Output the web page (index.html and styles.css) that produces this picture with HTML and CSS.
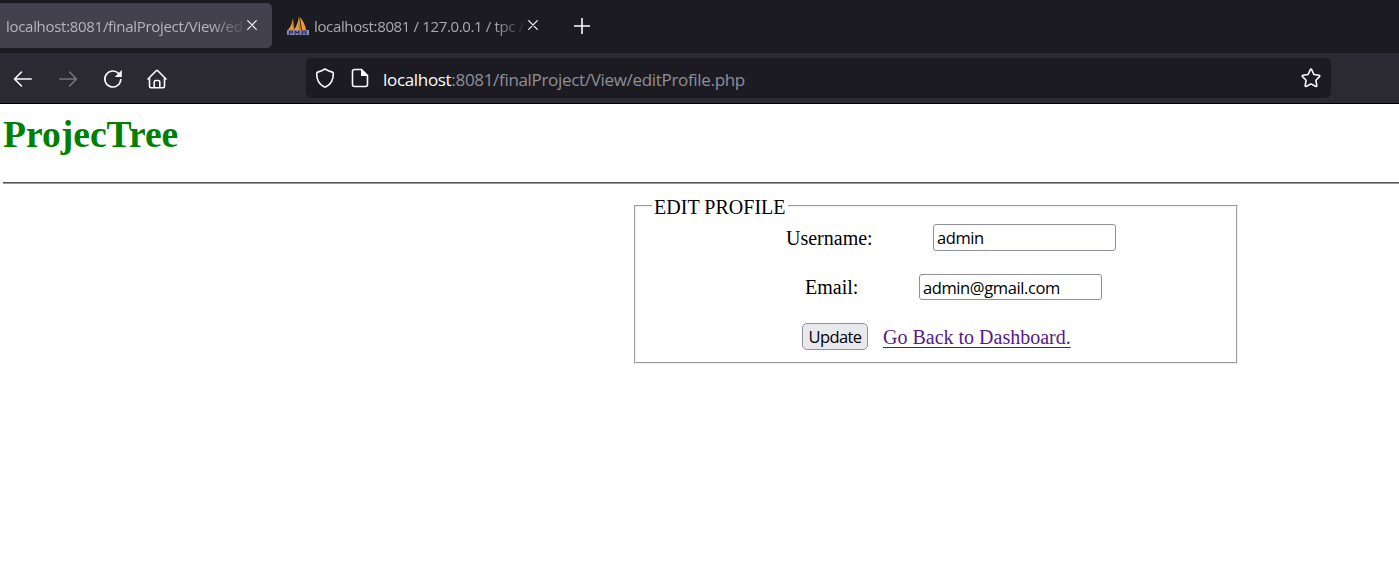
FILE: index.html
```html
<!DOCTYPE html>
<html lang="en">
<head>
<meta charset="utf-8">
<title>Edit Profile</title>
<link rel="stylesheet" href="styles.css">
</head>
<body>
<header class="browser">
  <div class="tabs">
    <div class="tab tab-active">
      <span class="tab-title">localhost:8081/finalProject/View/ed</span>
      <svg class="close" viewBox="0 0 10 10"><path d="M.7.7l8.6 8.6M9.3.7L.7 9.3"/></svg>
    </div>
    <div class="tab tab-second">
      <svg class="favicon" viewBox="0 0 22 20">
        <path fill="#f39a2b" d="M1 14Q5 9 6 2L7 14zM7 14Q11 8 12 0L14 14zM13 1Q18 7 19 14h-4z"/>
        <path fill="#c87820" d="M5 6l3 8H6zM11 4l3 10h-2z"/>
        <path fill="none" stroke="#8b8db8" stroke-width="5" d="M1 16.500h20"/>
        <path fill="none" stroke="#292b54" stroke-width="1.1" d="M2.500 19v-4h3v2h-3M8 19v-4l2 2 2-2v4M15 19v-4h4v4M15 17h4"/>
      </svg>
      <span class="tab-title">localhost:8081 / 127.0.0.1 / tpc /</span>
      <svg class="close" viewBox="0 0 10 10"><path d="M.7.7l8.6 8.6M9.3.7L.7 9.3"/></svg>
    </div>
    <svg class="plus" viewBox="0 0 16 16"><path d="M8 .5v15M.5 8h15"/></svg>
  </div>
  <div class="toolbar">
    <nav class="nav">
      <svg viewBox="0 0 20 20"><path d="M18.2 10H1.500M8.500 3L1.500 10l7 7"/></svg>
      <svg class="dim" viewBox="0 0 20 20"><path d="M1.800 10h16.700M11.500 3l7 7-7 7"/></svg>
      <svg viewBox="0 0 20 20"><path d="M17.800 10.500A8 8 0 1 1 15.700 4.600"/><path class="solid" d="M18.800 1v7h-7z"/></svg>
      <svg class="home" viewBox="0 0 20 20"><path d="M1 10l8.200-8.200q.8-.8 1.600 0L19 10M2.500 8.500V17q0 1.700 1.700 1.700h11.600q1.700 0 1.700-1.700V8.500M7.200 18.500V13q0-1.500 1.500-1.500h2.600q1.500 0 1.500 1.500v5.500"/></svg>
    </nav>
    <div class="address">
      <svg class="shield" viewBox="0 0 20 20"><path d="M10 1Q13 3 17.300 4.100q1 .3 1 1.400C18.300 11 16 16.500 11 18.800q-1 .5-2 0C4 16.500 1.700 11 1.700 5.500q0-1.100 1-1.400Q7 3 10 1z"/></svg>
      <svg class="page-icon" viewBox="0 0 20 20"><path d="M4.500 1.500h7l6 6v9q0 2-2 2h-11q-2 0-2-2v-13q0-2 2-2z"/><path class="solid" d="M11 1l7 7h-7z"/></svg>
      <span class="url"><b>localhost</b>:8081/finalProject/View/editProfile.php</span>
      <svg class="star" viewBox="0 0 20 20"><path d="M9.200 1.800q.8-1.300 1.600 0l2.100 4.700 5.100.7q1.300.3.500 1.400l-3.600 3.700.9 5.100q0 1.400-1.300.9L10 15.900l-4.500 2.400q-1.300.5-1.300-.9l.9-5.100-3.600-3.700q-.8-1.100.5-1.400l5.100-.7z"/></svg>
    </div>
  </div>
</header>
<main class="content">
  <h1 class="brand">ProjecTree</h1>
  <hr class="rule">
  <form class="form">
    <fieldset class="profile">
      <legend class="legend">EDIT PROFILE</legend>
      <div class="row row-user"><label class="label-user" for="user">Username:</label><input class="field" id="user" type="text" value="admin"></div>
      <div class="row row-email"><label class="label-email" for="email">Email:</label><input class="field field-email" id="email" type="text" value="admin@gmail.com"></div>
      <div class="row row-actions"><button class="update" type="button">Update</button><a class="back" href="#">Go Back to Dashboard.</a></div>
    </fieldset>
  </form>
</main>
</body>
</html>
```
FILE: styles.css
```css
* { box-sizing: border-box; }
body { margin: 0; height: 582px; overflow: hidden; background: #fff; color: #000; font: 20px "Liberation Serif", serif; }
svg { flex: none; fill: none; stroke: #fbfbfe; stroke-width: 1.6; stroke-linecap: round; stroke-linejoin: round; }
.solid { fill: #fbfbfe; stroke: none; }

.browser { height: 104px; background: #2b2a33; border-bottom: 1px solid #000; font-family: "Open Sans", sans-serif; }
.tabs { height: 53px; display: flex; align-items: center; background: #1c1b22; }
.tab { height: 45px; display: flex; align-items: center; color: #a9a9b0; font-size: 15px; }
.tab-active { width: 272px; margin-top: -3px; padding-left: 6px; background: #42414d; border-radius: 0 5px 5px 0; color: #b5b5bd; }
.tab-second { width: 295px; padding-left: 15px; margin-top: -3px; }
.tab-title { flex: none; white-space: nowrap; letter-spacing: -.3px; padding-top: 1px; width: 238px; mask-image: linear-gradient(to right, #000 204px, transparent 242px); }
.tab-second .tab-title { width: 211px; margin-left: 5px; letter-spacing: -.36px; mask-image: linear-gradient(to right, #000 180px, transparent 214px); }
.close { width: 10px; height: 10px; margin-left: 3px; stroke-width: 1.2; }
.favicon { width: 22px; height: 20px; stroke: none; margin-top: 2px; }
.plus { width: 16px; height: 16px; margin-left: 7px; stroke-width: 1.6; margin-top: -1px; }

.toolbar { height: 50px; display: flex; align-items: center; }
.nav { width: 306px; display: flex; gap: 25px; padding: 1px 0 0 13px; }
.nav svg { width: 20px; height: 20px; }
.nav .home { margin-left: -1px; }
.nav .dim { stroke: #77767d; }
.address { width: 1025px; height: 40px; padding: 0 10px 0 9px; display: flex; align-items: center; border-radius: 5px; background: #1c1b22; }
.shield, .page-icon, .star { width: 20px; height: 20px; }
.page-icon { margin-left: 15px; }
.url { margin-left: 13px; padding-top: 2px; font-size: 17px; color: #8f8f98; white-space: nowrap; letter-spacing: -.32px; }
.url b { color: #fbfbfe; font-weight: 400; }
.star { margin-left: auto; }

.content { padding-left: 3px; }
.brand { margin: 0; padding-top: 8px; height: 78px; color: green; font-size: 37.6px; line-height: 46px; }
.rule { margin: 0; height: 2px; border: 0; border-top: 1px solid #555; background: #999; }
.form { padding: 11px 0 0 631px; }
.profile { width: 604px; height: 169px; margin: 0; padding: 0 16px; border: 2px groove #f0f0f0; }
.legend { padding: 1px 2px 0; height: 22px; line-height: 23px; letter-spacing: .02px; }
.row { display: flex; align-items: center; white-space: nowrap; }
.row-user { height: 27px; padding-left: 134px; margin-top: 7px; }
.row-email { height: 26px; margin-top: 23px; padding-left: 153px; }
.row-actions { height: 27px; margin-top: 23px; padding-left: 150px; }
.row label, .back { padding-top: 1px; }
.label-user { width: 147px; }
.label-email { width: 114px; }
.field { width: 183px; height: 27px; padding: 1px 3px; border: 1px solid #8f8f9d; border-radius: 3px; font: 16.5px "Open Sans", sans-serif; letter-spacing: -.4px; background: #fff; color: #000; }
.field-email { height: 26px; }
.update { width: 66px; height: 27px; padding: 0; border: 1px solid #8f8f9d; border-radius: 5px; background: #e9e9ed; color: #000; font: 16.5px "Open Sans", sans-serif; letter-spacing: -.6px; }
.back { margin-left: 15px; color: #551a8b; text-underline-offset: 3px; text-decoration-thickness: 1px; }
```
